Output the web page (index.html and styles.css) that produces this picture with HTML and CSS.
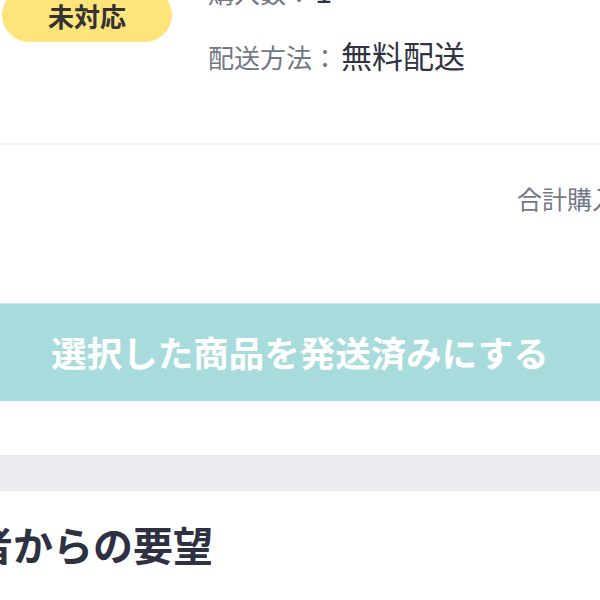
FILE: index.html
```html
<!DOCTYPE html>
<html lang="ja">
<head>
<meta charset="utf-8">
<title>注文詳細</title>
<link rel="stylesheet" href="styles.css">
</head>
<body>
<div class="page">
  <section class="item">
    <div class="item-status">
      <span class="badge">未対応</span>
    </div>
    <div class="item-info">
      <p class="info-line"><span class="info-label">購入数：</span><span class="info-value">1</span></p>
      <p class="info-line"><span class="info-label">配送方法：</span><span class="info-value">無料配送</span></p>
    </div>
  </section>
  <section class="summary">
    <p class="total"><span class="total-label">合計購入金額：</span><span class="total-value">¥3,300</span></p>
    <button class="ship-button" type="button">選択した商品を発送済みにする</button>
  </section>
  <div class="spacer"></div>
  <section class="requests">
    <h2 class="requests-title">購入者からの要望</h2>
  </section>
</div>
</body>
</html>
```
FILE: styles.css
```css
html, body {
  margin: 0;
  padding: 0;
  background: #ffffff;
}
body {
  width: 600px;
  height: 600px;
  overflow: hidden;
  font-family: "Noto Sans CJK JP", "Noto Sans", sans-serif;
}
.page {
  margin-left: -132px;
  margin-top: -40px;
  width: 864px;
}
p { margin: 0; }

.item {
  display: flex;
  padding: 10px 0 68px 134px;
  border-bottom: 2px solid #efeff3;
}
.item-status {
  width: 170px;
  flex: none;
  padding-top: 18px;
}
.badge {
  display: flex;
  align-items: center;
  justify-content: center;
  height: 54px;
  border-radius: 27px;
  background: #ffe47c;
  color: #333333;
  font-size: 26px;
  font-weight: 700;
}
.item-info {
  margin-left: 36px;
  display: flex;
  flex-direction: column;
  gap: 25px;
}
.info-line {
  height: 40px;
  line-height: 40px;
  white-space: nowrap;
}
.info-label {
  font-size: 26px;
  color: #737887;
}
.info-value {
  font-size: 31px;
  color: #2f3342;
  margin-left: 3px;
}

.summary {
  padding: 35px 0 54px;
}
.total {
  padding-left: 649px;
  line-height: 36px;
  font-size: 25px;
  color: #737887;
  white-space: nowrap;
}
.ship-button {
  display: block;
  width: 100%;
  height: 98px;
  margin-top: 87px;
  border: 0;
  border-top: 1px solid #c9eaea;
  background: #a8dcdc;
  color: #ffffff;
  font-family: "Noto Sans CJK JP", "Noto Sans", sans-serif;
  font-size: 35.5px;
  font-weight: 700;
  padding: 0 0 2px;
}

.spacer {
  height: 36px;
  background: #ebebef;
}

.requests {
  padding: 25px 30px 40px 25px;
}
.requests-title {
  margin: 0;
  font-size: 40px;
  line-height: 56px;
  font-weight: 700;
  color: #2e3142;
}
```
